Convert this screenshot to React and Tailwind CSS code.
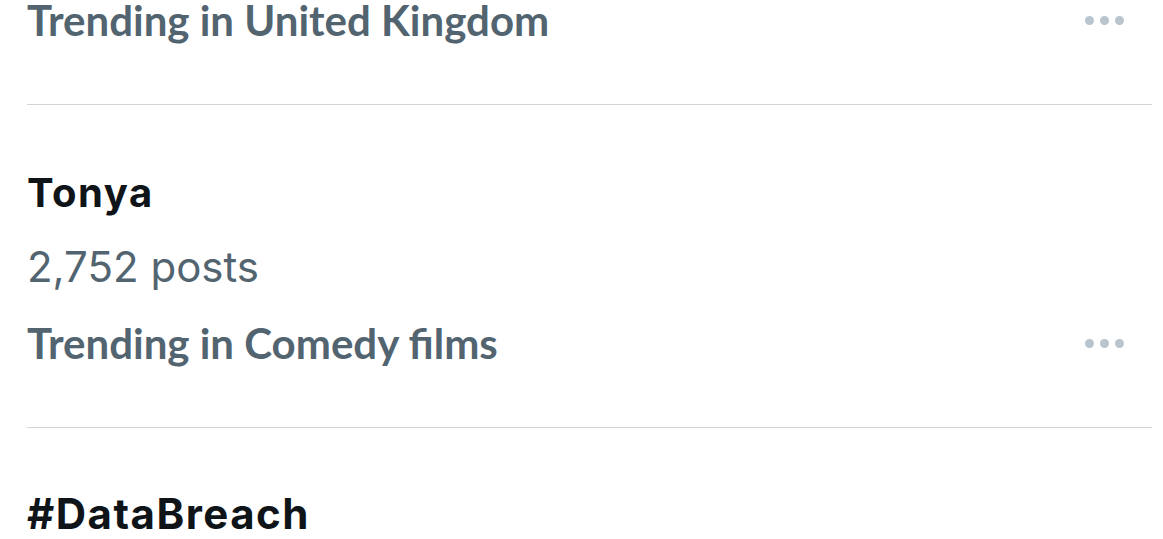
import React from "react";

const Dots = () => (
  <div className="flex items-center gap-[6px] pr-[28px]">
    <span className="h-[9px] w-[9px] rounded-full bg-[#b9c5ce]" />
    <span className="h-[9px] w-[9px] rounded-full bg-[#b9c5ce]" />
    <span className="h-[9px] w-[9px] rounded-full bg-[#b9c5ce]" />
  </div>
);

const context = "font-['Lato','Noto_Sans',sans-serif] text-[42px] leading-[40px] font-bold text-[#536471]";
const headline = "font-['Inter','Liberation_Sans',sans-serif] leading-[40px] font-bold tracking-[1.5px] text-[#0f1419]";

const App = () => {
  return (
    <div className="min-h-[539px] overflow-hidden bg-white pl-[27px] pr-[11px]">
      <div className="flex items-center justify-between">
        <p className={context}>Trending in United Kingdom</p>
        <Dots />
      </div>

      <div className="mt-[64px] border-t border-[#cfd4d7]" />

      <div className="pt-[68px]">
        <p className={`text-[40px] ${headline}`}>Tonya</p>
        <p className="mt-[34px] font-['Inter','Liberation_Sans',sans-serif] text-[42px] leading-[40px] text-[#536471]">
          2,752 posts
        </p>
        <div className="mt-[36px] flex items-center justify-between">
          <p className={context}>Trending in Comedy films</p>
          <Dots />
        </div>
      </div>

      <div className="mt-[64px] border-t border-[#cfd4d7]" />

      <p className={`mt-[66px] text-[42px] ${headline}`}>#DataBreach</p>
    </div>
  );
};

export default App;
